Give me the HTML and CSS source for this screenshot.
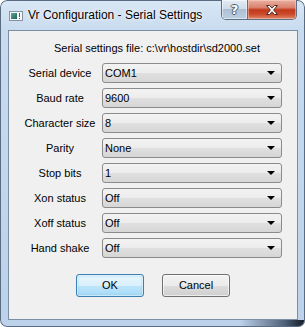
FILE: index.html
```html
<!DOCTYPE html>
<html>
<head>
<meta charset="utf-8">
<link rel="stylesheet" href="styles.css">
</head>
<body>
<div class="window">
  <div class="titlebar">
    <svg class="app-icon" width="14" height="10" viewBox="0 0 14 10">
      <rect x="0.5" y="0.5" width="13" height="9" fill="#f4f6f8" stroke="#8593a3"/>
      <defs>
        <linearGradient id="g1" x1="0" y1="0" x2="1" y2="1">
          <stop offset="0" stop-color="#5fa89a"/>
          <stop offset="1" stop-color="#1e5f58"/>
        </linearGradient>
      </defs>
      <rect x="2" y="2" width="6" height="6" fill="url(#g1)"/>
      <rect x="10" y="2" width="1" height="4" fill="#4a5a6a"/>
      <rect x="10" y="7" width="1" height="1" fill="#4a5a6a"/>
    </svg>
    <span class="title">Vr Configuration - Serial Settings</span>
    <div class="caption-buttons">
      <div class="cap-btn help"><span class="help-glyph">?</span></div>
      <div class="cap-btn close">
        <svg width="14" height="12" viewBox="0 0 14 12">
          <path d="M1.5 1.5 L4.5 1.5 L7 4.2 L9.5 1.5 L12.5 1.5 L8.6 6 L12.5 10.5 L9.5 10.5 L7 7.8 L4.5 10.5 L1.5 10.5 L5.4 6 Z" fill="#ffffff" stroke="#4a2a24" stroke-width="1" stroke-linejoin="round"/>
        </svg>
      </div>
    </div>
  </div>
  <div class="client">
    <div class="file-line">Serial settings file: c:\vr\hostdir\sd2000.set</div>
    <div class="row"><span class="label">Serial device</span><div class="combo"><span>COM1</span><i class="arrow"></i></div></div>
    <div class="row"><span class="label">Baud rate</span><div class="combo"><span>9600</span><i class="arrow"></i></div></div>
    <div class="row"><span class="label">Character size</span><div class="combo"><span>8</span><i class="arrow"></i></div></div>
    <div class="row"><span class="label">Parity</span><div class="combo"><span>None</span><i class="arrow"></i></div></div>
    <div class="row"><span class="label">Stop bits</span><div class="combo"><span>1</span><i class="arrow"></i></div></div>
    <div class="row"><span class="label">Xon status</span><div class="combo"><span>Off</span><i class="arrow"></i></div></div>
    <div class="row"><span class="label">Xoff status</span><div class="combo"><span>Off</span><i class="arrow"></i></div></div>
    <div class="row"><span class="label">Hand shake</span><div class="combo"><span>Off</span><i class="arrow"></i></div></div>
    <div class="buttons">
      <div class="btn default">OK</div>
      <div class="btn">Cancel</div>
    </div>
  </div>
</div>
</body>
</html>
```
FILE: styles.css
```css
html, body {
  margin: 0;
  padding: 0;
  background: #ffffff;
}
.window {
  width: 305px;
  height: 327px;
  box-sizing: border-box;
  border-radius: 7px;
  box-shadow: inset 0 0 0 1px #5a6c82;
  background:
    linear-gradient(90deg, rgba(30,45,65,0) 0, rgba(30,45,65,0) 240px, rgba(40,58,82,0.75) 285px, rgba(15,22,32,0.95) 303px) left bottom / 100% 7px no-repeat,
    linear-gradient(180deg, #d9e7f5 0, #c8dbef 30px, #bcd2ea 100%);
  display: flex;
  flex-direction: column;
  overflow: hidden;
  font-family: "Liberation Sans", Arial, sans-serif;
}
.titlebar {
  height: 30px;
  display: flex;
  align-items: flex-start;
  padding: 0 8px 0 9px;
  box-sizing: border-box;
}
.app-icon {
  margin-top: 11px;
  flex: none;
}
.title {
  margin-top: 7px;
  margin-left: 5px;
  font-size: 12px;
  line-height: 16px;
  color: #000;
  text-shadow: 0 0 6px rgba(255,255,255,0.95), 0 0 2px rgba(255,255,255,0.9);
  white-space: nowrap;
}
.caption-buttons {
  margin-left: auto;
  display: flex;
  height: 20px;
  border: 1px solid #5f6f83;
  border-top: none;
  border-radius: 0 0 5px 5px;
  overflow: hidden;
  box-sizing: border-box;
}
.cap-btn {
  display: flex;
  align-items: center;
  justify-content: center;
  box-sizing: border-box;
  height: 19px;
}
.help {
  width: 26px;
  border-right: 1px solid #5f6f83;
  background: linear-gradient(180deg, #e3ebf4 0, #cfdcea 45%, #aebfd3 50%, #bccfe3 100%);
  box-shadow: inset 0 0 0 1px rgba(255,255,255,0.5);
}
.help-glyph {
  font-family: "DejaVu Sans", sans-serif;
  font-weight: bold;
  font-size: 13px;
  line-height: 13px;
  color: #ffffff;
  text-shadow: 1px 0 0 #4d5a68, -1px 0 0 #4d5a68, 0 1px 0 #4d5a68, 0 -1px 0 #4d5a68;
}
.close {
  width: 48px;
  background: linear-gradient(180deg, #eab2a4 0, #d9806b 40%, #c2391c 52%, #cc4a2c 75%, #e0896a 100%);
  box-shadow: inset 0 0 0 1px rgba(255,220,210,0.45);
}
.close svg {
  display: block;
}
.client {
  width: 290px;
  height: 290px;
  margin-left: 8px;
  box-sizing: border-box;
  border: 1px solid #7c8ea4;
  background: #f0f0f0;
  display: flex;
  flex-direction: column;
  gap: 5px;
  padding-top: 7px;
  font-size: 11px;
  color: #000;
}
.file-line {
  height: 20px;
  line-height: 20px;
  padding-left: 8px;
  text-align: center;
  white-space: nowrap;
}
.row {
  display: flex;
  height: 20px;
  padding-left: 9px;
  gap: 0;
}
.label {
  width: 84px;
  text-align: center;
  line-height: 20px;
  white-space: nowrap;
}
.combo {
  width: 180px;
  height: 20px;
  box-sizing: border-box;
  border: 1px solid #8b8b8b;
  border-radius: 3px;
  background: linear-gradient(180deg, #f3f3f3 0, #ececec 50%, #e0e0e0 50%, #d6d6d6 100%);
  display: flex;
  align-items: center;
  padding: 0 6px 0 2px;
}
.combo span {
  flex: 1;
  line-height: 18px;
}
.arrow {
  width: 0;
  height: 0;
  border-left: 4px solid transparent;
  border-right: 4px solid transparent;
  border-top: 4px solid #000;
}
.buttons {
  display: flex;
  justify-content: center;
  gap: 18px;
  margin-top: 11px;
}
.btn {
  width: 68px;
  height: 23px;
  box-sizing: border-box;
  border: 1px solid #707070;
  border-radius: 3px;
  background: linear-gradient(180deg, #f2f2f2 0, #ebebeb 50%, #dddddd 50%, #cfcfcf 100%);
  box-shadow: inset 0 0 0 1px rgba(255,255,255,0.6);
  text-align: center;
  line-height: 21px;
}
.btn.default {
  border-color: #3c7fb1;
  background: linear-gradient(180deg, #eaf6fd 0, #d9f0fc 50%, #bee6fd 50%, #a7d9f5 100%);
  box-shadow: inset 0 0 0 1px rgba(255,255,255,0.55), inset 0 0 2px 1px rgba(110,190,235,0.6);
}
```
